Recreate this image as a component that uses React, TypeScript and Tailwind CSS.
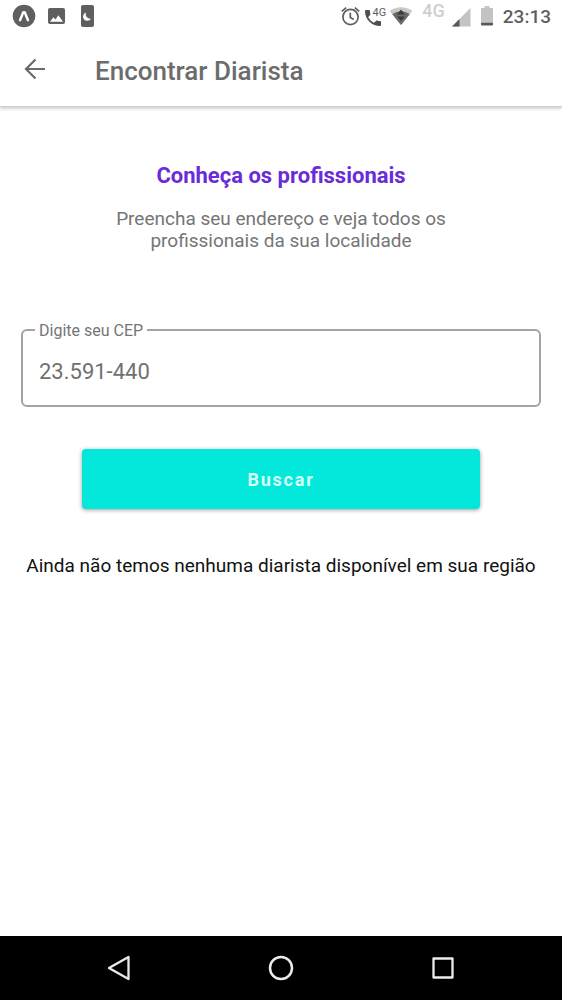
import { useState } from "react";

function AppBadgeIcon() {
  return (
    <svg className="size-6" viewBox="0 0 24 24" aria-hidden="true">
      <circle cx="12" cy="12" r="11.3" fill="#5f5f5f" />
      <path d="M8 16.2 11.300 8.300h1.400L16 16.200" fill="none" stroke="#fff" strokeWidth="2.4" strokeLinejoin="round" strokeLinecap="round" />
    </svg>
  );
}

function PictureIcon() {
  return (
    <svg className="h-4 w-[17px]" viewBox="0 0 17 16" aria-hidden="true">
      <rect width="17" height="16" rx="2" fill="#5f5f5f" />
      <path d="M2 13.800 5.400 9.300l2 2.300 3-4.300 4.600 6.500z" fill="#fff" />
    </svg>
  );
}

function NightPhoneIcon() {
  return (
    <svg className="h-[22px] w-[13px]" viewBox="0 0 13 22" aria-hidden="true">
      <rect width="13" height="22" rx="2" fill="#5f5f5f" />
      <path d="M5 7.6a4.2 4.2 0 1 0 4.9 6.1A4.6 4.6 0 0 1 5 7.6z" fill="#fff" />
    </svg>
  );
}

function AlarmIcon() {
  return (
    <svg className="h-5 w-[19px]" viewBox="0 0 19 20" fill="none" stroke="#5f5f5f" strokeWidth="1.7" aria-hidden="true">
      <circle cx="9.5" cy="11" r="7.6" />
      <path d="M9.3 6.8v4.7l3.5 2.1" />
      <path d="M.8 5.3 5.2 1.6M18.2 5.3 13.8 1.6" />
    </svg>
  );
}

function HandsetIcon() {
  return (
    <svg className="size-4" viewBox="3 3 18 18" fill="#4f4f4f" aria-hidden="true">
      <path d="M6.62 10.79c1.44 2.83 3.76 5.14 6.59 6.59l2.2-2.2c.27-.27.67-.36 1.02-.24 1.12.37 2.33.57 3.57.57.55 0 1 .45 1 1V20c0 .55-.45 1-1 1-9.39 0-17-7.61-17-17 0-.55.45-1 1-1h3.5c.55 0 1 .45 1 1 0 1.25.2 2.45.57 3.57.11.35.03.74-.25 1.02z" />
    </svg>
  );
}

function WifiIcon() {
  return (
    <svg className="h-[18px] w-6" viewBox="0 0 24 18" aria-hidden="true">
      <path d="M12 18 .7 4C4 1.500 8 .3 12 .3S20 1.500 23.300 4z" fill="#c9c9c9" />
      <path d="M12 18 3.300 7.200C6 5.200 9 4.200 12 4.200s6 1 8.700 3z" fill="#6a6a6a" />
      <path d="m12 2.500 4 5H8zM8 9.500h8l-4 4.500z" fill="#3b3b3b" />
    </svg>
  );
}

function SignalIcon() {
  return (
    <svg className="h-[19px] w-[19px]" viewBox="0 0 19 19" aria-hidden="true">
      <path d="M18.500 0v18.500H0z" fill="#c3c3c3" />
      <path d="M7.500 11v7.500H0z" fill="#585858" />
    </svg>
  );
}

function BatteryIcon() {
  return (
    <svg className="h-5 w-3" viewBox="0 0 12 20" aria-hidden="true">
      <path d="M3.500 0h5v2H11q1 0 1 1v13H0V3q0-1 1-1h2.500z" fill="#c3c3c3" />
      <path d="M0 16.500h12v2q0 1-1 1H1q-1 0-1-1z" fill="#585858" />
    </svg>
  );
}

function StatusBar() {
  return (
    <div className="flex h-8 items-center justify-between pr-[11px] pl-3 text-[#5f5f5f]">
      <div className="flex items-center">
        <AppBadgeIcon />
        <span className="ml-3 flex"><PictureIcon /></span>
        <span className="ml-4 flex"><NightPhoneIcon /></span>
      </div>
      <div className="flex items-center">
        <AlarmIcon />
        <span className="relative ml-[5px] flex h-5 w-5 items-end">
          <HandsetIcon />
          <span className="absolute top-px -right-px text-[11px] leading-[11px]">4G</span>
        </span>
        <span className="ml-1 flex"><WifiIcon /></span>
        <span className="ml-[9px] self-start text-[18px] leading-4 font-medium text-[#cfcfcf]">4G</span>
        <span className="ml-[7px] flex pt-[3px]"><SignalIcon /></span>
        <span className="ml-[10px] flex"><BatteryIcon /></span>
        <span className="ml-[10px] pt-[2px] text-[19px] leading-6 font-medium">23:13</span>
      </div>
    </div>
  );
}

function Header() {
  return (
    <header className="border-b border-[#d0d0d0] bg-white shadow-[0_2px_3px_rgba(0,0,0,0.18)]">
      <StatusBar />
      <div className="flex h-[74px] items-center gap-[49px] pl-6">
        <button type="button" aria-label="Voltar" className="flex">
          <svg className="size-[22px]" viewBox="0 0 22 22" fill="none" stroke="#6a6a6a" strokeWidth="2.2" aria-hidden="true">
            <path d="M21 11H2M11.500 1.500 2 11l9.500 9.500" />
          </svg>
        </button>
        <h1 className="pt-[3px] text-[26px] leading-8 font-medium text-[#6c6c6c]">Encontrar Diarista</h1>
      </div>
    </header>
  );
}

function NavigationBar() {
  return (
    <nav className="grid h-16 grid-cols-3 items-center justify-items-center bg-black px-[38px]">
      <button type="button" aria-label="Voltar" className="flex">
        <svg className="size-7" viewBox="0 0 28 28" fill="none" stroke="#ececec" strokeWidth="2.300" strokeLinejoin="round" aria-hidden="true">
          <path d="M23.500 3v22L4 14z" />
        </svg>
      </button>
      <button type="button" aria-label="Início" className="flex">
        <svg className="size-7" viewBox="0 0 28 28" fill="none" stroke="#ececec" strokeWidth="2.500" aria-hidden="true">
          <circle cx="14" cy="14" r="11" />
        </svg>
      </button>
      <button type="button" aria-label="Recentes" className="flex">
        <svg className="size-7" viewBox="0 0 28 28" fill="none" stroke="#ececec" strokeWidth="2.300" strokeLinejoin="round" aria-hidden="true">
          <rect x="4.500" y="4.500" width="19" height="19" />
        </svg>
      </button>
    </nav>
  );
}

export default function App() {
  const [cep, setCep] = useState("23.591-440");

  return (
    <div className="flex min-h-screen flex-col bg-white font-['Roboto',sans-serif]">
      <Header />
      <main className="flex flex-1 flex-col px-[21px] pt-[55px] text-center">
        <h2 className="text-[22px] leading-7 font-bold text-[#6a2bd9]">Conheça os profissionais</h2>
        <p className="mx-auto mt-[18px] max-w-[360px] text-[19px] leading-[22px] text-[#757575]">
          Preencha seu endereço e veja todos os profissionais da sua localidade
        </p>
        <form className="mt-[67px]" onSubmit={(event) => event.preventDefault()}>
          <fieldset className="rounded-md border-2 border-[#a3a3a3] px-3 text-left">
            <legend className="px-1 pt-[2px] text-[16px] leading-5 text-[#757575]">
              <label htmlFor="cep">Digite seu CEP</label>
            </legend>
            <input
              id="cep"
              className="block h-16 w-full px-1 pb-1 text-[22px] text-[#707070] outline-none"
              inputMode="numeric"
              value={cep}
              onChange={(event) => setCep(event.target.value)}
            />
          </fieldset>
          <div className="mt-[42px] px-[61px]">
            <button
              type="submit"
              className="h-[60px] w-full rounded bg-[#04e8dc] text-[18px] font-bold tracking-widest text-[#d4fffb] shadow-[0_1px_4px_rgba(0,0,0,0.4)]"
            >
              Buscar
            </button>
          </div>
        </form>
        <p className="-mx-3 mt-[46px] text-[19px] leading-[22px] text-[#111]">
          Ainda não temos nenhuma diarista disponível em sua região
        </p>
      </main>
      <NavigationBar />
    </div>
  );
}
